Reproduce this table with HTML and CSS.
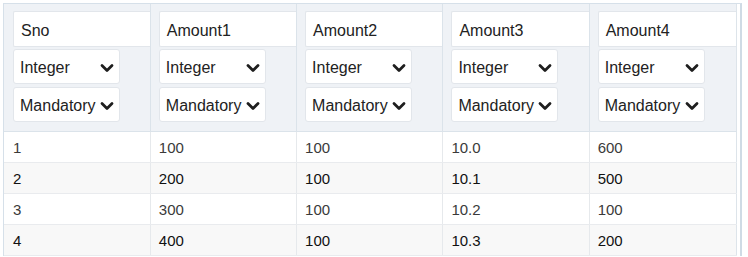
FILE: index.html
```html
<!DOCTYPE html>
<html>
<head>
<meta charset="utf-8">
<link rel="stylesheet" href="styles.css">
</head>
<body>
<div class="wrap">
<table class="grid">
  <colgroup><col class="c"><col class="c"><col class="c"><col class="c"><col class="last"></colgroup>
  <thead>
    <tr>
      <th>
        <div class="field">Sno</div>
        <div class="sel"><span>Integer</span><svg class="chev" viewBox="0 0 14 10"><path d="M2 2.5 L7 7.5 L12 2.5"/></svg></div>
        <div class="sel"><span>Mandatory</span><svg class="chev" viewBox="0 0 14 10"><path d="M2 2.5 L7 7.5 L12 2.5"/></svg></div>
      </th>
      <th>
        <div class="field">Amount1</div>
        <div class="sel"><span>Integer</span><svg class="chev" viewBox="0 0 14 10"><path d="M2 2.5 L7 7.5 L12 2.5"/></svg></div>
        <div class="sel"><span>Mandatory</span><svg class="chev" viewBox="0 0 14 10"><path d="M2 2.5 L7 7.5 L12 2.5"/></svg></div>
      </th>
      <th>
        <div class="field">Amount2</div>
        <div class="sel"><span>Integer</span><svg class="chev" viewBox="0 0 14 10"><path d="M2 2.5 L7 7.5 L12 2.5"/></svg></div>
        <div class="sel"><span>Mandatory</span><svg class="chev" viewBox="0 0 14 10"><path d="M2 2.5 L7 7.5 L12 2.5"/></svg></div>
      </th>
      <th>
        <div class="field">Amount3</div>
        <div class="sel"><span>Integer</span><svg class="chev" viewBox="0 0 14 10"><path d="M2 2.5 L7 7.5 L12 2.5"/></svg></div>
        <div class="sel"><span>Mandatory</span><svg class="chev" viewBox="0 0 14 10"><path d="M2 2.5 L7 7.5 L12 2.5"/></svg></div>
      </th>
      <th>
        <div class="field">Amount4</div>
        <div class="sel"><span>Integer</span><svg class="chev" viewBox="0 0 14 10"><path d="M2 2.5 L7 7.5 L12 2.5"/></svg></div>
        <div class="sel"><span>Mandatory</span><svg class="chev" viewBox="0 0 14 10"><path d="M2 2.5 L7 7.5 L12 2.5"/></svg></div>
      </th>
    </tr>
  </thead>
  <tbody>
    <tr class="odd"><td>1</td><td>100</td><td>100</td><td>10.0</td><td>600</td></tr>
    <tr class="even"><td>2</td><td>200</td><td>100</td><td>10.1</td><td>500</td></tr>
    <tr class="odd"><td>3</td><td>300</td><td>100</td><td>10.2</td><td>100</td></tr>
    <tr class="even"><td>4</td><td>400</td><td>100</td><td>10.3</td><td>200</td></tr>
  </tbody>
</table>
</div>
</body>
</html>
```
FILE: styles.css
```css
html, body {
  margin: 0;
  padding: 0;
  background: #ffffff;
}
body {
  font-family: "Liberation Sans", Arial, Helvetica, sans-serif;
  color: #333;
}
.wrap {
  margin: 3px 0 0 3px;
  width: 739px;
  border-left: 1px solid #d6e0e9;
  border-top: 1px solid #d6e0e9;
  border-right: 2px solid #cfdbe5;
  box-sizing: border-box;
}
.grid {
  border-collapse: collapse;
  table-layout: fixed;
  width: 733px;
  border-right: 1px solid #dde4ea;
}
.grid col.c { width: 146px; }
.grid col.last { width: 147px; }
.grid th {
  background: #eff2f6;
  border-left: 1px solid #dbe3ea;
  border-bottom: 1px solid #dbe3ea;
  padding: 7px 0 9px 8px;
  text-align: left;
  font-weight: normal;
  vertical-align: top;
}
.grid th:first-child { border-left: none; padding-left: 9px; }
.field {
  height: 36px;
  box-sizing: border-box;
  background: #fff;
  border: 1px solid #e2e6eb;
  border-right: none;
  border-radius: 2px 0 0 2px;
  padding: 0 7px;
  font-size: 16px;
  line-height: 37px;
  color: #222;
}
.sel {
  width: 107px;
  height: 35px;
  box-sizing: border-box;
  margin-top: 2px;
  background: #fff;
  border: 1px solid #e2e6eb;
  border-radius: 3px;
  padding: 2px 5px 0 6px;
  display: flex;
  align-items: center;
  justify-content: space-between;
  font-size: 16px;
  color: #222;
  white-space: nowrap;
}
.sel + .sel { margin-top: 3px; }
.chev {
  width: 14px;
  height: 10px;
  flex: none;
}
.chev path {
  fill: none;
  stroke: #1e1e1e;
  stroke-width: 2.8;
  stroke-linecap: round;
  stroke-linejoin: round;
}
.grid td {
  height: 30px;
  padding: 0 0 0 8px;
  border-left: 1px solid #e6e9ec;
  border-bottom: 1px solid #e9ebee;
  font-size: 15px;
  color: #333;
}
.grid td:first-child { border-left: none; padding-left: 9px; }
.grid tr.odd td { background: #ffffff; color: #3a3a3a; }
.grid tr.even td { background: #f8f8f8; color: #111; }
```
